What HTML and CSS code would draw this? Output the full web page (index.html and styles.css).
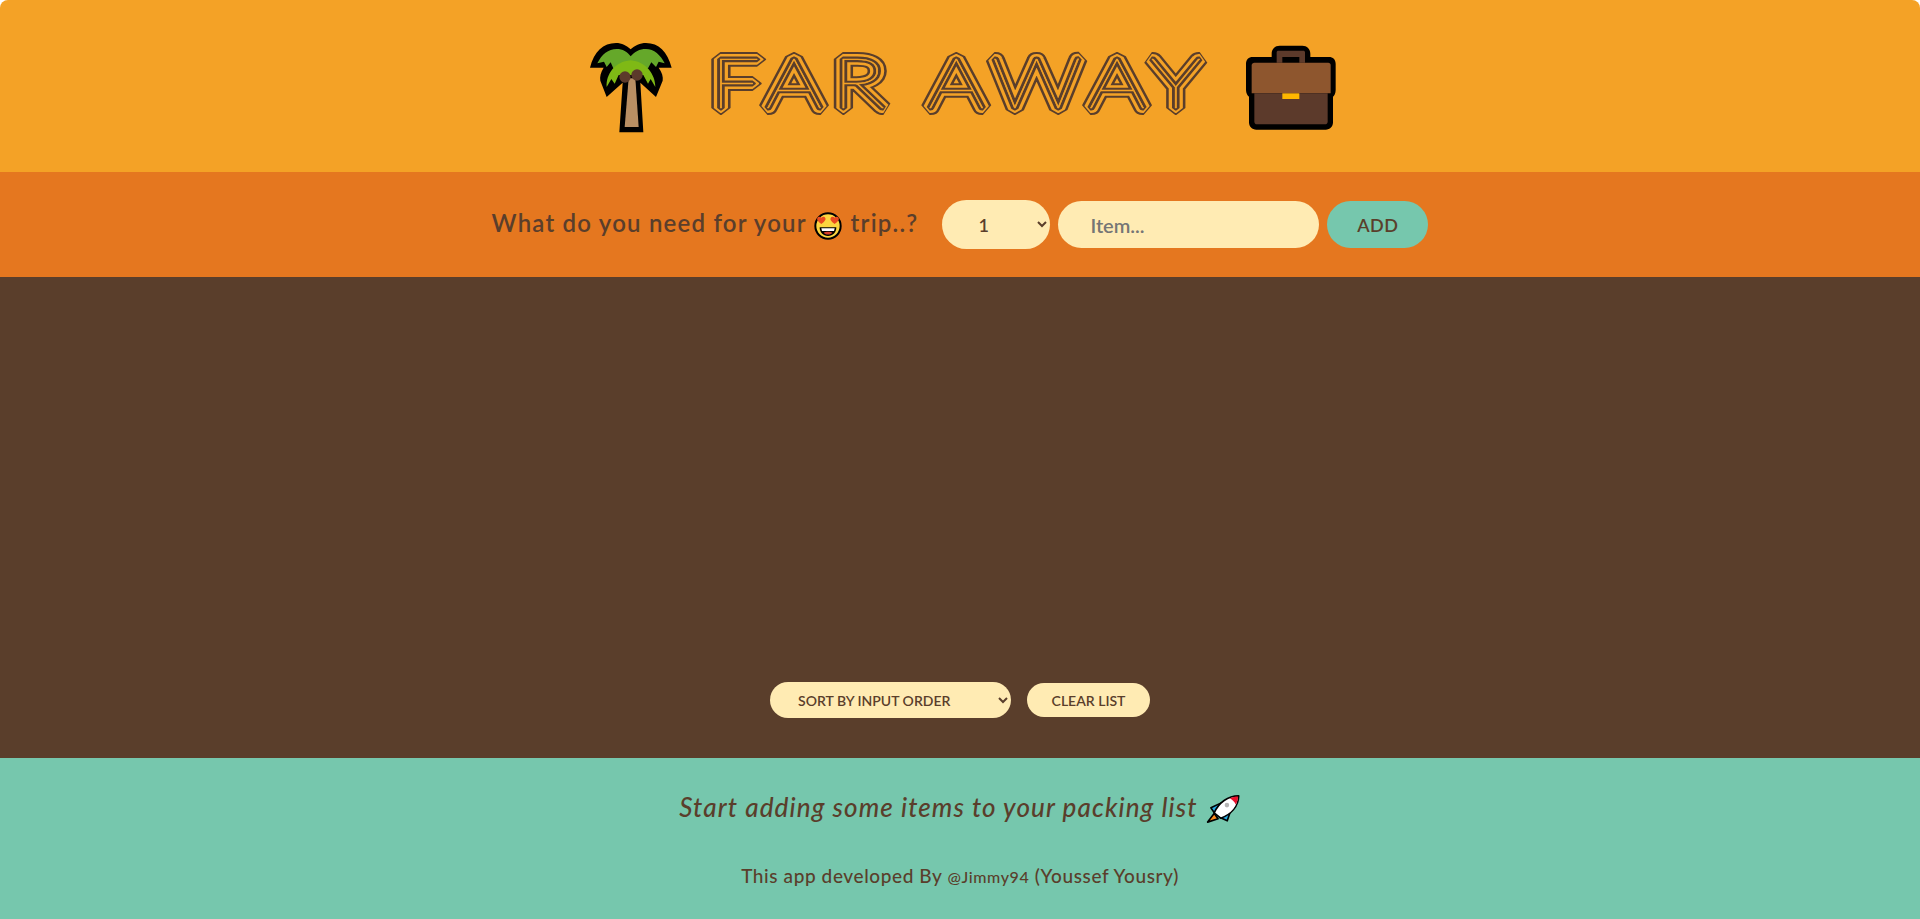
FILE: index.html
```html
<!DOCTYPE html>
<html lang="en">
<head>
    <meta charset="UTF-8">
    <meta name="viewport" content="width=device-width, initial-scale=1.0">
    <title>Far Away</title>
    <link rel="stylesheet" href="styles.css">
</head>
<body>
    <div class="app">
        <header class="logo">
            <svg class="logo-icon" viewBox="0 0 300 315" aria-hidden="true">
                <path fill="#000" d="M30 98C42 50 70 24 108 24C125 24 140 32 152 43C164 32 180 24 198 24C236 24 262 50 275 98L236 98C246 112 250 125 248 137L228 186L181 143L190 292L118 292L128 143L80 186L61 137C59 125 62 112 71 98Z"/>
                <path fill="#b98f63" d="M146 130L166 130L176 276L134 276Z"/>
                <path fill="#65a82a" d="M52 85C65 58 85 42 110 42C128 42 142 50 152 64C164 50 178 42 198 42C222 42 242 60 254 85L236 80L228 96L214 82L204 100L100 100L92 82L80 96L72 80Z"/>
                <path fill="#7fb915" d="M80 156C78 118 104 80 152 76C198 80 226 118 226 156L212 132L204 146L190 120L116 120L104 146L94 132Z"/>
                <circle cx="135" cy="126" r="17" fill="#5c3a2b"/>
                <circle cx="171" cy="120" r="17" fill="#5c3a2b"/>
            </svg>
            <h1 class="logo-title">
                <svg class="title-svg" viewBox="0 0 385 100" preserveAspectRatio="none" role="img" aria-label="FAR AWAY">
                    <g class="layer-outer">
                        <text id="title-text" class="title-text" x="0" y="72">FAR AWAY</text>
                    </g>
                    <use class="layer-gap" href="#title-text"/>
                    <use class="layer-inner" href="#title-text"/>
                    <use class="layer-core" href="#title-text"/>
                </svg>
            </h1>
            <svg class="logo-icon" viewBox="15 0 300 315" aria-hidden="true">
                <path fill="#000" d="M110 66L110 56C110 42 120 32 134 32L202 32C216 32 226 42 226 56L226 66L282 66C294 66 302 74 302 86L302 165C302 175 298 182 294 185L294 262C294 275 285 284 272 284L64 284C51 284 42 275 42 262L42 185C38 182 33 175 33 165L33 86C33 74 41 66 53 66Z"/>
                <path fill="#5c3a2b" d="M125 83L125 52C125 49 127 47 130 47L205 47C208 47 210 49 210 52L210 83L193 83L193 66L142 66L142 83Z"/>
                <path fill="#8e562e" d="M58 83L280 83C284 83 287 86 287 90L287 175L50 175L50 90C50 86 54 83 58 83Z"/>
                <path fill="#5c3a2b" d="M58 175L278 175L278 260C278 265 274 268 270 268L66 268C62 268 58 265 58 260Z"/>
                <rect x="142" y="175" width="51" height="17" fill="#ffb700"/>
            </svg>
        </header>

        <form class="add-form">
            <h3 class="add-title">What do you need for your
                <svg class="emoji" viewBox="30 27 90 90" aria-hidden="true">
                    <circle cx="75" cy="72" r="38" fill="#fcd53f" stroke="#000" stroke-width="6"/>
                    <path fill="#ea4a1f" d="M55 66C44 58 41 53 43 48C45 43 52 43 55 47C58 43 65 43 67 48C69 53 66 58 55 66Z"/>
                    <path fill="#ea4a1f" d="M95 66C84 58 81 53 83 48C85 43 92 43 95 47C98 43 105 43 107 48C109 53 106 58 95 66Z"/>
                    <path fill="#000" d="M50 76L100 76C100 92 90 102 75 102C60 102 50 92 50 76Z"/>
                    <path fill="#fff" d="M55 79L95 79L93 87L57 87Z"/>
                    <path fill="#d8402a" d="M62 92C68 88 82 88 88 92C84 99 66 99 62 92Z"/>
                </svg>
                trip..?</h3>
            <select class="qty-select">
                <option>1</option>
                <option>2</option>
                <option>3</option>
            </select>
            <input class="item-input" type="text" placeholder="Item...">
            <button class="add-button" type="button">ADD</button>
        </form>

        <main class="list">
            <div class="actions">
                <select class="sort-select">
                    <option>SORT BY INPUT ORDER</option>
                    <option>SORT BY DESCRIPTION</option>
                    <option>SORT BY PACKED STATUS</option>
                </select>
                <button class="clear-button" type="button">CLEAR LIST</button>
            </div>
        </main>

        <footer class="stats">
            <em class="stats-text">Start adding some items to your packing list
                <svg class="emoji rocket" viewBox="30 18 110 110" aria-hidden="true">
                    <path fill="#ff8c1a" stroke="#000" stroke-width="5" stroke-linejoin="round" d="M58 84L38 110L70 100Z"/>
                    <path fill="#27a9e1" stroke="#000" stroke-width="5" stroke-linejoin="round" d="M78 52L48 66L60 84Z"/>
                    <path fill="#27a9e1" stroke="#000" stroke-width="5" stroke-linejoin="round" d="M108 76L98 106L76 96Z"/>
                    <path fill="#fff" stroke="#000" stroke-width="5" stroke-linejoin="round" d="M133 30C100 30 72 50 58 82L78 98C110 86 132 62 133 30Z"/>
                    <path fill="#e8112d" d="M131 32C122 32 114 34 106 38C114 42 120 48 124 56C129 48 131 40 131 32Z"/>
                    <circle cx="97" cy="58" r="7" fill="#b5b5b5"/>
                </svg>
            </em>
            <p class="credit">This app developed By <a class="credit-link" href="#">@Jimmy94</a> (Youssef Yousry)</p>
        </footer>
    </div>
</body>
</html>
```

FILE: styles.css
```css
* {
    margin: 0;
    padding: 0;
    box-sizing: border-box;
}

body {
    font-family: "Lato", "Noto Sans", sans-serif;
    color: #5a3e2b;
}

.app {
    display: grid;
    grid-template-rows: 172px 105px 1fr 161px;
    height: 100vh;
    overflow: hidden;
}

/* header */
.logo {
    display: flex;
    justify-content: center;
    align-items: center;
    gap: 30px;
    background-color: #f4a226;
    border-radius: 8px 8px 0 0;
}

.logo-icon {
    width: 100px;
    height: 105px;
    flex-shrink: 0;
    margin-top: 3px;
}

.logo-title {
    display: flex;
    font-weight: 100;
}

.title-svg {
    width: 500px;
    height: 100px;
}

.title-text {
    font-family: "Lato", sans-serif;
    font-size: 69px;
    font-weight: 100;
    letter-spacing: 7.6px;
}

.layer-outer,
.layer-gap,
.layer-inner,
.layer-core {
    stroke-linejoin: bevel;
}

.layer-outer {
    fill: #5a3e2b;
    stroke: #5a3e2b;
    stroke-width: 14px;
}

.layer-gap {
    fill: #f4a226;
    stroke: #f4a226;
    stroke-width: 10px;
}

.layer-inner {
    fill: #5a3e2b;
    stroke: #5a3e2b;
    stroke-width: 5px;
}

.layer-core {
    fill: #f4a226;
    stroke: #f4a226;
    stroke-width: 0.6px;
}

/* form */
.add-form {
    display: flex;
    justify-content: center;
    align-items: center;
    gap: 8px;
    background-color: #e5771f;
}

.add-title {
    margin-right: 16px;
    font-size: 24px;
    font-weight: 600;
    letter-spacing: 1.2px;
}

.emoji {
    width: 30px;
    height: 30px;
    vertical-align: middle;
}

.rocket {
    width: 36px;
    height: 36px;
}

.qty-select,
.item-input,
.add-button {
    border: none;
    border-radius: 30px;
    font-family: inherit;
    font-size: 18px;
    font-weight: 600;
    color: #5a3e2b;
}

.qty-select {
    width: 108px;
    height: 49px;
    padding: 0 32px;
    background-color: #ffebb3;
}

.item-input {
    width: 261px;
    height: 47px;
    padding: 0 32px;
    font-size: 20px;
    background-color: #ffebb3;
}

.add-button {
    width: 101px;
    height: 47px;
    letter-spacing: 0.5px;
    background-color: #76c7ad;
}

/* list */
.list {
    display: flex;
    justify-content: center;
    align-items: flex-end;
    padding-bottom: 40px;
    background-color: #5a3e2b;
}

.actions {
    display: flex;
    align-items: center;
    gap: 16px;
}

.sort-select,
.clear-button {
    border: none;
    border-radius: 30px;
    background-color: #ffebb3;
    font-family: inherit;
    font-size: 14px;
    font-weight: 600;
    color: #5a3e2b;
}

.sort-select {
    width: 241px;
    height: 36px;
    padding: 0 24px;
}

.clear-button {
    width: 123px;
    height: 34px;
}

/* footer */
.stats {
    display: flex;
    flex-direction: column;
    align-items: center;
    padding-top: 33px;
    gap: 36px;
    background-color: #76c7ad;
}

.stats-text {
    font-size: 26px;
    letter-spacing: 1.1px;
    font-weight: 500;
}

.credit {
    font-size: 19px;
    font-weight: 500;
    letter-spacing: 0.6px;
}

.credit-link {
    font-size: 16px;
    color: #5a3e2b;
    text-decoration: none;
}
```
